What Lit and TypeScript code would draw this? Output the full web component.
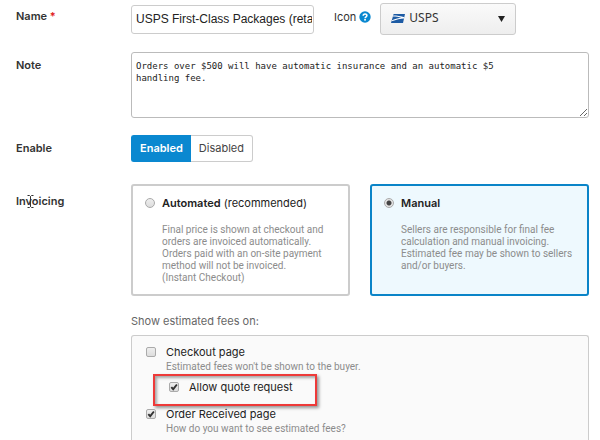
import { LitElement, html, css, svg } from "lit";
import { customElement, state } from "lit/decorators.js";
import { classMap } from "lit/directives/class-map.js";

type Mode = "automated" | "manual";

const eagle = svg`
  <path d="M2.6 0H14L12 9H0Z" fill="#1d5ba4" />
  <path d="M2.200 1.500C6 1.500 10 2 13.500 3.200L13 4.500C9.500 4.600 5.500 5.600 0.700 7.300L1 6.200C4.500 4.800 8 4 10.300 3.700C8 2.900 5 2.500 2 2.500Z" fill="#fff" />
`;

@customElement("app-root")
export class AppRoot extends LitElement {
  @state() private enabled = true;
  @state() private mode: Mode = "manual";

  static styles = css`
    :host {
      display: flex;
      flex-direction: column;
      box-sizing: border-box;
      min-height: 100vh;
      padding: 3px 11px 0 16px;
      background: #fff;
      color: #333;
      font: 11px/14px Inter, "Liberation Sans", sans-serif;
    }
    * {
      box-sizing: border-box;
    }
    .row {
      display: grid;
      grid-template-columns: 115px 1fr;
    }
    .row + .row {
      margin-top: 17px;
    }
    .label {
      padding-top: 6px;
      font-weight: 600;
    }
    .required {
      color: #e02020;
    }
    .fields {
      display: flex;
      align-items: center;
    }
    .name {
      width: 183px;
      height: 29px;
      padding: 0 1px 0 4px;
      border: 1px solid #ccc;
      border-radius: 3px;
      color: #222;
      font: 12px/16px "Liberation Sans", Arial, sans-serif;
    }
    .icon-label {
      margin: 0 3px 0 20px;
      padding-bottom: 4px;
    }
    .help {
      width: 12px;
      height: 16px;
      margin-right: 9px;
      padding: 0 0 4px;
      border: 0;
      background: none;
    }
    .help svg {
      display: block;
    }
    .picker {
      position: relative;
      width: 136px;
    }
    .picker select {
      display: block;
      width: 100%;
      height: 32px;
      padding: 0 24px 2px 28px;
      border: 1px solid #ccc;
      border-radius: 3px;
      background: linear-gradient(#fafafa, #eee);
      color: #333;
      font: 12px/16px "Noto Sans", sans-serif;
      appearance: none;
    }
    .picker svg {
      position: absolute;
      pointer-events: none;
    }
    .carrier {
      left: 11px;
      top: 11px;
    }
    .arrow {
      right: 11px;
      top: 13px;
    }
    .note {
      display: block;
      width: 100%;
      height: 66px;
      padding: 7px 4px;
      border: 1px solid #bbb;
      border-radius: 3px;
      color: #222;
      font: 9px/12px "DejaVu Sans Mono", monospace;
    }
    .toggle {
      display: flex;
    }
    .toggle button {
      height: 27px;
      padding: 0 8px 2px;
      border: 1px solid #ccc;
      background: #fff;
      color: #444;
      font: inherit;
    }
    .toggle button:first-child {
      border-right: 0;
      border-radius: 3px 0 0 3px;
    }
    .toggle button:last-child {
      border-left: 0;
      border-radius: 0 3px 3px 0;
    }
    .toggle .on {
      border-color: #0a88d0;
      background: #0a88d0;
      color: #fff;
      font-weight: 600;
    }
    .invoicing {
      position: relative;
      padding-top: 15px;
    }
    .caret {
      position: absolute;
      left: 11px;
      top: 16px;
    }
    .cards {
      display: grid;
      grid-template-columns: 1fr 1fr;
      gap: 20px;
      padding-top: 5px;
    }
    .card {
      display: grid;
      grid-template-columns: 10px 1fr;
      align-content: start;
      column-gap: 7px;
      height: 112px;
      padding: 10px 4px 0 12px;
      border: 2px solid #ccc;
      border-radius: 3px;
    }
    .card.on {
      border-color: #0a84c8;
      background: #eef9fe;
    }
    .title {
      color: #222;
    }
    .title b {
      font-weight: 600;
    }
    .desc {
      color: #8c8c8c;
      font: 10px/12px Roboto, sans-serif;
    }
    .card .desc {
      grid-column: 2;
      margin-top: 14px;
    }
    input[type="radio"],
    input[type="checkbox"] {
      width: 10px;
      height: 10px;
      margin: 2px 0 0;
      border: 1px solid #aaa;
      background: linear-gradient(#eee, #ddd);
      appearance: none;
    }
    input[type="radio"] {
      border-radius: 50%;
    }
    input[type="radio"]:checked {
      background: radial-gradient(#444 0 2px, #e4e4e4 3px);
    }
    input[type="checkbox"] {
      border-radius: 2px;
    }
    .box {
      display: grid;
      width: 10px;
      height: 14px;
    }
    .box > * {
      grid-area: 1 / 1;
    }
    .box svg {
      visibility: hidden;
      margin-top: 2px;
      pointer-events: none;
    }
    .box input:checked + svg {
      visibility: visible;
    }
    .estimates {
      display: flex;
      flex: 1;
      flex-direction: column;
      margin: 18px 0 0 115px;
      color: #666;
    }
    .panel {
      flex: 1;
      margin-top: 7px;
      padding: 9px 14px 0;
      border: 1px solid #ccc;
      border-bottom: 0;
      border-radius: 3px 3px 0 0;
      background: #fafafa;
    }
    .option {
      display: grid;
      grid-template-columns: 10px 1fr;
      column-gap: 10px;
    }
    .option .desc {
      grid-column: 2;
      margin-top: 2px;
    }
    .marked {
      width: 164px;
      margin: 1px 0 1px 7px;
      padding: 4px 14px 10px;
      border: 2px solid #ee3a39;
      box-shadow: 2px 2px 3px #0006, inset 2px 2px 3px #0005;
    }
  `;

  private check(id: string, checked: boolean) {
    return html`<span class="box">
      <input type="checkbox" id=${id} .checked=${checked} />
      <svg width="10" height="10" viewBox="0 0 10 10" aria-hidden="true">
        <path d="M2.300 5.100 4.200 7.200 7.900 2.500" fill="none" stroke="#333" stroke-width="1.900" />
      </svg>
    </span>`;
  }

  private card(mode: Mode, title: string, hint: string, lines: string[]) {
    const on = this.mode === mode;
    return html`<div class=${classMap({ card: true, on })}>
      <input type="radio" name="mode" id=${mode} .checked=${on}
        @change=${() => (this.mode = mode)} />
      <label class="title" for=${mode}><b>${title}</b> ${hint}</label>
      <div class="desc">${lines.map((line) => html`<div>${line}</div>`)}</div>
    </div>`;
  }

  render() {
    return html`
      <div class="row">
        <label class="label" for="name">Name <span class="required">*</span></label>
        <div class="fields">
          <input class="name" id="name" value="USPS First-Class Packages (retail)" />
          <label class="icon-label" for="carrier">Icon</label>
          <button class="help" aria-label="Help">
            <svg width="12" height="12" viewBox="0 0 12 12">
              <circle cx="6" cy="6" r="5.700" fill="#0a88d0" />
              <path d="M4.200 4.700C4.200 2.400 7.900 2.400 7.900 4.600C7.900 5.900 6.100 5.800 6.100 7.200" fill="none" stroke="#fff" stroke-width="1.600" />
              <rect x="5.200" y="8" width="1.700" height="1.600" fill="#fff" />
            </svg>
          </button>
          <div class="picker">
            <select id="carrier"><option>USPS</option></select>
            <svg class="carrier" width="15" height="9" viewBox="0 0 15 9">${eagle}</svg>
            <svg class="arrow" width="7" height="6" viewBox="0 0 7 6"><path d="M0 0H7L3.500 6Z" fill="#222" /></svg>
          </div>
        </div>
      </div>
      <div class="row">
        <label class="label" for="note">Note</label>
        <textarea class="note" id="note" .value=${"Orders over $500 will have automatic insurance and an automatic $5\nhandling fee."}></textarea>
      </div>
      <div class="row">
        <span class="label" id="enable">Enable</span>
        <div class="toggle" role="group" aria-labelledby="enable">
          <button class=${classMap({ on: this.enabled })} @click=${() => (this.enabled = true)}>Enabled</button>
          <button class=${classMap({ on: !this.enabled })} @click=${() => (this.enabled = false)}>Disabled</button>
        </div>
      </div>
      <div class="row">
        <span class="label invoicing" id="invoicing">Invoicing
          <svg class="caret" width="7" height="13" viewBox="0 0 7 13" aria-hidden="true">
            <path d="M0.500 0.500H2.500L3.500 1.500 4.500 0.500H6.500M3.500 1.500V11.500M0.500 12.500H2.500L3.500 11.500 4.500 12.500H6.500" fill="none" stroke="#333" />
          </svg>
        </span>
        <div class="cards" role="radiogroup" aria-labelledby="invoicing">
          ${this.card("automated", "Automated", "(recommended)", [
            "Final price is shown at checkout and",
            "orders are invoiced automatically.",
            "Orders paid with an on-site payment",
            "method will not be invoiced.",
            "(Instant Checkout)",
          ])}
          ${this.card("manual", "Manual", "", [
            "Sellers are responsible for final fee",
            "calculation and manual invoicing.",
            "Estimated fee may be shown to sellers",
            "and/or buyers.",
          ])}
        </div>
      </div>
      <div class="estimates" role="group" aria-labelledby="fees">
        <span id="fees">Show estimated fees on:</span>
        <div class="panel">
          <div class="option">
            ${this.check("checkout", false)}
            <label class="title" for="checkout">Checkout page</label>
            <div class="desc">Estimated fees won't be shown to the buyer.</div>
          </div>
          <div class="option marked">
            ${this.check("quote", true)}
            <label class="title" for="quote">Allow quote request</label>
          </div>
          <div class="option">
            ${this.check("received", true)}
            <label class="title" for="received">Order Received page</label>
            <div class="desc">How do you want to see estimated fees?</div>
          </div>
        </div>
      </div>
    `;
  }
}
